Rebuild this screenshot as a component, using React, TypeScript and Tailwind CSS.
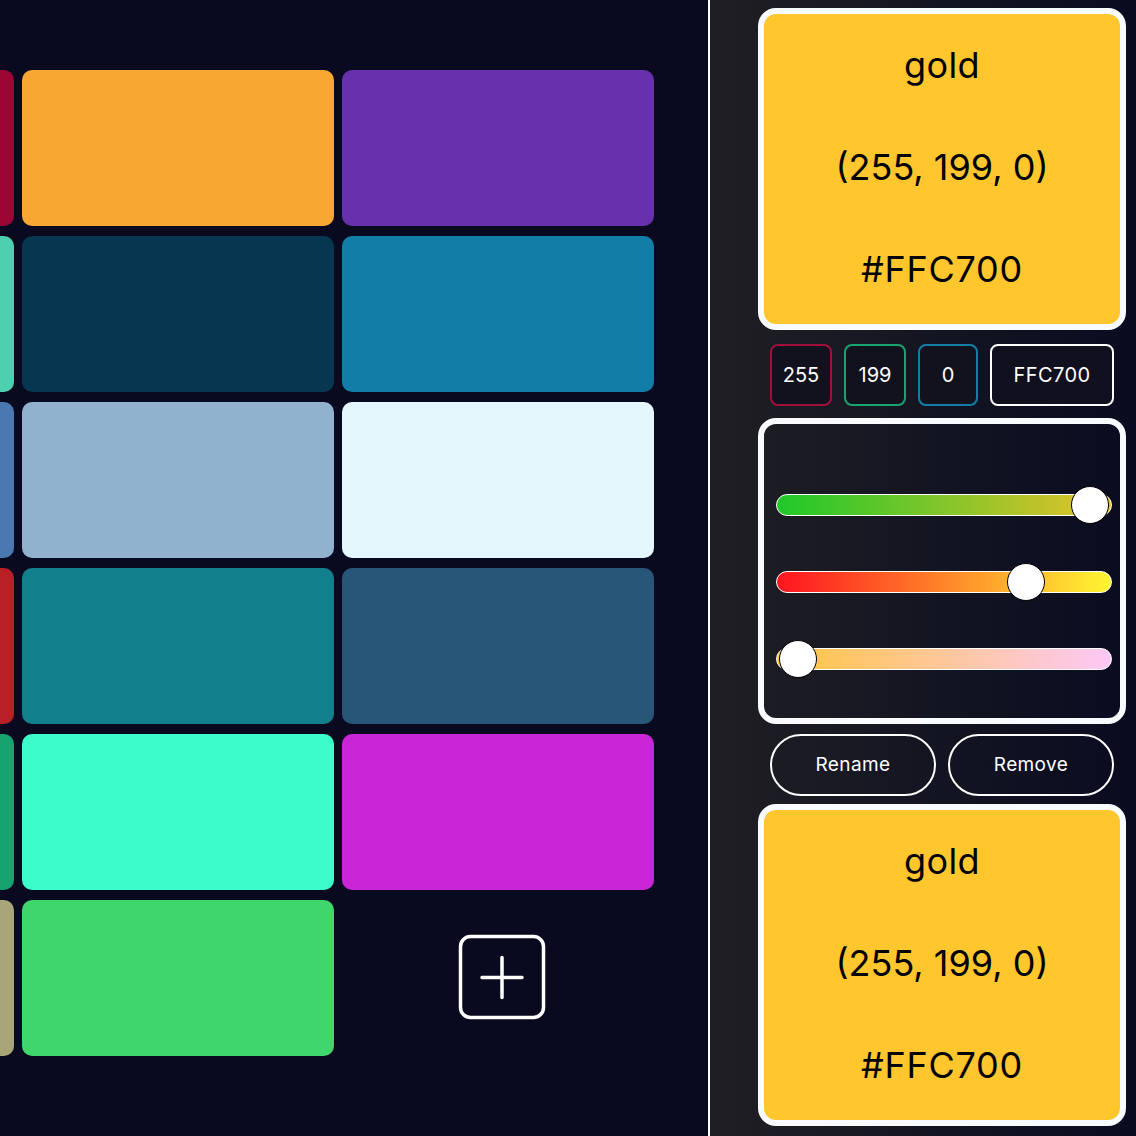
import React from "react";

const cards: (string | null)[] = [
  "#9c0634", "#f8a832", "#6731ad",
  "#4dd0b0", "#063650", "#127ea8",
  "#4a78b0", "#91b2ce", "#e3f7fd",
  "#b92025", "#12808c", "#285679",
  "#17a36f", "#3afdcb", "#c926d7",
  "#a8a578", "#3fd66c", null,
];

function ColorCard() {
  return (
    <div className="w-[368px] h-[322px] rounded-[18px] border-[6px] border-[#f8fbff] bg-[#ffc62e] flex flex-col justify-around items-center text-black text-[36px] leading-none pb-[4px]">
      <div className="tracking-[0.01em]">gold</div>
      <div>(255, 199, 0)</div>
      <div className="tracking-[0.02em]">#FFC700</div>
    </div>
  );
}

function Slider({ gradient, value }: { gradient: string; value: number }) {
  const left = 3 + (value / 255) * 292;
  return (
    <div className="relative w-[336px] h-[38px] flex items-center">
      <div className={`w-full h-[22px] rounded-full border border-white ${gradient}`} />
      <div
        className="absolute top-0 w-[38px] h-[38px] rounded-full bg-white border-[1.5px] border-black"
        style={{ left }}
      />
    </div>
  );
}

export default function App() {
  return (
    <div
      className="w-[1136px] h-[1136px] flex overflow-hidden"
      style={{ fontFamily: "Inter, 'Noto Sans', sans-serif" }}
    >
      <div className="w-[708px] h-full bg-[#090a1f] overflow-hidden">
        <div className="ml-[-298px] mt-[70px] grid grid-cols-[312px_312px_312px] gap-x-2 gap-y-[10px]">
          {cards.map((c, i) =>
            c ? (
              <div key={i} className="h-[156px] rounded-[10px]" style={{ background: c }} />
            ) : (
              <div key={i} className="h-[156px] flex items-center justify-center pl-[8px]">
                <svg width="88" height="88" viewBox="0 0 88 88" fill="none" stroke="white" strokeLinecap="round">
                  <rect x="2.5" y="2.5" width="83" height="81" rx="10" strokeWidth="3.5" />
                  <path d="M24 43.5h40M44 23.5v40" strokeWidth="3.5" />
                </svg>
              </div>
            )
          )}
        </div>
      </div>
      <div className="w-[2px] h-full bg-white" />
      <div className="flex-1 h-full bg-gradient-to-r from-[#1f1f23] to-[#0a0b20] pl-[48px] pt-[8px]">
        <ColorCard />
        <div className="w-[368px] px-3 mt-[14px] flex gap-3 text-white text-[20px]">
          <div className="w-[62px] h-[62px] rounded-[8px] border-2 border-[#a0103a] bg-[#12121f] flex items-center justify-center">255</div>
          <div className="w-[62px] h-[62px] rounded-[8px] border-2 border-[#18a36f] bg-[#12121f] flex items-center justify-center">199</div>
          <div className="w-[60px] h-[62px] rounded-[8px] border-2 border-[#127ea8] bg-[#12121f] flex items-center justify-center">0</div>
          <div className="flex-1 h-[62px] rounded-[8px] border-2 border-white bg-[#10101e] flex items-center justify-center tracking-[0.02em]">FFC700</div>
        </div>
        <div className="w-[368px] h-[306px] mt-[12px] rounded-[18px] border-[6px] border-[#f8fbff] pl-[12px] pt-[62px] flex flex-col gap-[39px]">
          <Slider gradient="bg-[linear-gradient(to_right,#1fc82a,#e8c22a)]" value={255} />
          <Slider gradient="bg-[linear-gradient(to_right,#ff1420,#fff632)]" value={199} />
          <Slider gradient="bg-[linear-gradient(to_right,#ffc640,#fcc8f6)]" value={0} />
        </div>
        <div className="w-[368px] px-3 mt-[10px] flex gap-3 text-white text-[19px] tracking-[0.02em]">
          <div className="flex-1 h-[62px] rounded-full border-2 border-white flex items-center justify-center">Rename</div>
          <div className="flex-1 h-[62px] rounded-full border-2 border-white flex items-center justify-center">Remove</div>
        </div>
        <div className="mt-[8px]">
          <ColorCard />
        </div>
      </div>
    </div>
  );
}
